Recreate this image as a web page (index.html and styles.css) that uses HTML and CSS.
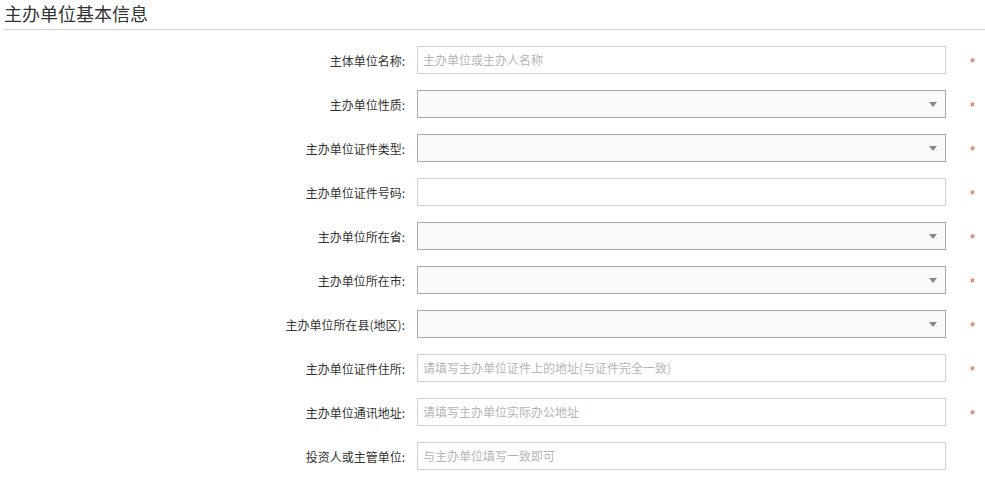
FILE: index.html
```html
<!DOCTYPE html>
<html lang="zh">
<head>
<meta charset="utf-8">
<link rel="stylesheet" href="styles.css">
</head>
<body>
<div class="page">
  <div class="title">主办单位基本信息</div>
  <div class="form">
    <div class="row"><label>主体单位名称:</label><div class="field input">主办单位或主办人名称</div><span class="star">*</span></div>
    <div class="row"><label>主办单位性质:</label><div class="field select"><span class="caret"></span></div><span class="star">*</span></div>
    <div class="row"><label>主办单位证件类型:</label><div class="field select"><span class="caret"></span></div><span class="star">*</span></div>
    <div class="row"><label>主办单位证件号码:</label><div class="field input"></div><span class="star">*</span></div>
    <div class="row"><label>主办单位所在省:</label><div class="field select"><span class="caret"></span></div><span class="star">*</span></div>
    <div class="row"><label>主办单位所在市:</label><div class="field select"><span class="caret"></span></div><span class="star">*</span></div>
    <div class="row"><label>主办单位所在县(地区):</label><div class="field select"><span class="caret"></span></div><span class="star">*</span></div>
    <div class="row"><label>主办单位证件住所:</label><div class="field input">请填写主办单位证件上的地址(与证件完全一致)</div><span class="star">*</span></div>
    <div class="row"><label>主办单位通讯地址:</label><div class="field input">请填写主办单位实际办公地址</div><span class="star">*</span></div>
    <div class="row"><label>投资人或主管单位:</label><div class="field input">与主办单位填写一致即可</div><span class="star"></span></div>
  </div>
</div>
</body>
</html>
```

FILE: styles.css
```css
html, body {
  margin: 0;
  padding: 0;
  background: #fff;
}
.page {
  font-family: "Microsoft YaHei", "Noto Sans CJK SC", "Noto Sans", sans-serif;
  color: #333;
}
.title {
  margin: 0 0 0 3px;
  width: 982px;
  box-sizing: border-box;
  height: 30px;
  padding: 1px 0 0 1px;
  font-size: 18px;
  line-height: 24px;
  color: #333;
  border-bottom: 1px solid #d0d0d0;
}
.form {
  padding-top: 16px;
  display: flex;
  flex-direction: column;
  gap: 16px;
}
.row {
  display: flex;
  align-items: center;
  height: 28px;
}
.row label {
  width: 405px;
  text-align: right;
  font-size: 12px;
  color: #333;
  padding-right: 12px;
  box-sizing: content-box;
}
.field {
  width: 529px;
  height: 28px;
  box-sizing: border-box;
  font-size: 12px;
  line-height: 26px;
  padding-left: 5px;
  position: relative;
}
.input {
  border: 1px solid #d2d2d2;
  background: #fff;
  color: #b5b5b5;
}
.select {
  border: 1px solid #aaa;
  background: #fafafa;
}
.caret {
  position: absolute;
  right: 8px;
  top: 11px;
  width: 0;
  height: 0;
  border-left: 4px solid transparent;
  border-right: 4px solid transparent;
  border-top: 5px solid #888;
}
.star {
  margin-left: 24px;
  width: 12px;
  font-family: "Liberation Sans", Arial, sans-serif;
  font-size: 13px;
  color: #e0572a;
  line-height: 13px;
  padding-top: 4px;
}
```
